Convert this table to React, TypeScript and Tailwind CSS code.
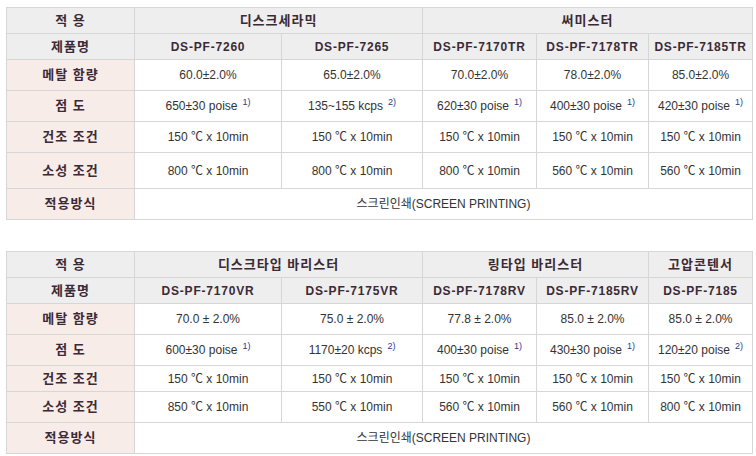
type Cell = { text: string; note?: string; span?: number };
type Row = { label: string; cells: Cell[]; h: string; head?: boolean; ko?: boolean };

const cols = ["w-[128px]", "w-[147px]", "w-[141px]", "w-[114px]", "w-[112px]", "w-[104px]"];

const table1: Row[] = [
  { label: "적 용", head: true, ko: true, h: "h-[26px]", cells: [{ text: "디스크세라믹", span: 2 }, { text: "써미스터", span: 3 }] },
  {
    label: "제품명",
    head: true,
    h: "h-[26px]",
    cells: [
      { text: "DS-PF-7260" },
      { text: "DS-PF-7265" },
      { text: "DS-PF-7170TR" },
      { text: "DS-PF-7178TR" },
      { text: "DS-PF-7185TR" },
    ],
  },
  {
    label: "메탈 함량",
    h: "h-[31px]",
    cells: [
      { text: "60.0±2.0%" },
      { text: "65.0±2.0%" },
      { text: "70.0±2.0%" },
      { text: "78.0±2.0%" },
      { text: "85.0±2.0%" },
    ],
  },
  {
    label: "점 도",
    h: "h-[31px]",
    cells: [
      { text: "650±30 poise", note: "1)" },
      { text: "135~155 kcps", note: "2)" },
      { text: "620±30 poise", note: "1)" },
      { text: "400±30 poise", note: "1)" },
      { text: "420±30 poise", note: "1)" },
    ],
  },
  {
    label: "건조 조건",
    h: "h-[31px]",
    cells: [
      { text: "150 ℃ x 10min" },
      { text: "150 ℃ x 10min" },
      { text: "150 ℃ x 10min" },
      { text: "150 ℃ x 10min" },
      { text: "150 ℃ x 10min" },
    ],
  },
  {
    label: "소성 조건",
    h: "h-[36px]",
    cells: [
      { text: "800 ℃ x 10min" },
      { text: "800 ℃ x 10min" },
      { text: "800 ℃ x 10min" },
      { text: "560 ℃ x 10min" },
      { text: "560 ℃ x 10min" },
    ],
  },
  { label: "적용방식", h: "h-[31px]", cells: [{ text: "스크린인쇄(SCREEN PRINTING)", span: 5 }] },
];

const table2: Row[] = [
  {
    label: "적 용",
    head: true,
    ko: true,
    h: "h-[26px]",
    cells: [
      { text: "디스크타입 바리스터", span: 2 },
      { text: "링타입 바리스터", span: 2 },
      { text: "고압콘텐서" },
    ],
  },
  {
    label: "제품명",
    head: true,
    h: "h-[26px]",
    cells: [
      { text: "DS-PF-7170VR" },
      { text: "DS-PF-7175VR" },
      { text: "DS-PF-7178RV" },
      { text: "DS-PF-7185RV" },
      { text: "DS-PF-7185" },
    ],
  },
  {
    label: "메탈 함량",
    h: "h-[31px]",
    cells: [
      { text: "70.0 ± 2.0%" },
      { text: "75.0 ± 2.0%" },
      { text: "77.8 ± 2.0%" },
      { text: "85.0 ± 2.0%" },
      { text: "85.0 ± 2.0%" },
    ],
  },
  {
    label: "점 도",
    h: "h-[31px]",
    cells: [
      { text: "600±30 poise", note: "1)" },
      { text: "1170±20 kcps", note: "2)" },
      { text: "400±30 poise", note: "1)" },
      { text: "430±30 poise", note: "1)" },
      { text: "120±20 poise", note: "2)" },
    ],
  },
  {
    label: "건조 조건",
    h: "h-[26px]",
    cells: [
      { text: "150 ℃ x 10min" },
      { text: "150 ℃ x 10min" },
      { text: "150 ℃ x 10min" },
      { text: "150 ℃ x 10min" },
      { text: "150 ℃ x 10min" },
    ],
  },
  {
    label: "소성 조건",
    h: "h-[31px]",
    cells: [
      { text: "850 ℃ x 10min" },
      { text: "550 ℃ x 10min" },
      { text: "560 ℃ x 10min" },
      { text: "560 ℃ x 10min" },
      { text: "800 ℃ x 10min" },
    ],
  },
  { label: "적용방식", h: "h-[31px]", cells: [{ text: "스크린인쇄(SCREEN PRINTING)", span: 5 }] },
];

function SpecTable({ rows }: { rows: Row[] }) {
  return (
    <table className="w-[746px] table-fixed border-collapse border border-[#d6d6d6] text-[12px] leading-[14px]">
      <colgroup>
        {cols.map((c, i) => (
          <col key={i} className={c} />
        ))}
      </colgroup>
      <tbody>
        {rows.map((row) => (
          <tr key={row.label} className={row.h}>
            <th
              className={`border border-[#d6d6d6] p-0 text-center text-[13px] font-bold tracking-[1px] text-[#3b2a35] ${
                row.head ? "bg-[#eeeeee]" : "bg-[#f8ece9]"
              }`}
            >
              {row.label}
            </th>
            {row.cells.map((c, i) =>
              row.head ? (
                <th
                  key={i}
                  colSpan={c.span ?? 1}
                  className={`border border-[#d6d6d6] bg-[#eeeeee] p-0 text-center font-bold text-[#3b2a35] ${
                    row.ko ? "text-[13px] tracking-[1px]" : "text-[12px] tracking-[0.8px]"
                  }`}
                >
                  {c.text}
                </th>
              ) : (
                <td
                  key={i}
                  colSpan={c.span ?? 1}
                  className="border border-[#d6d6d6] bg-white p-0 text-center text-[#333333]"
                >
                  {c.text}
                  {c.note && (
                    <sup className="relative -top-[5px] ml-[5px] text-[9px] text-[#2b3a8c]">{c.note}</sup>
                  )}
                </td>
              )
            )}
          </tr>
        ))}
      </tbody>
    </table>
  );
}

export default function App() {
  return (
    <div
      className="min-h-screen bg-white pl-[6px] pt-[7px]"
      style={{ fontFamily: '"Liberation Sans", "Noto Sans CJK KR", sans-serif' }}
    >
      <SpecTable rows={table1} />
      <div className="h-[31px]" />
      <SpecTable rows={table2} />
    </div>
  );
}
